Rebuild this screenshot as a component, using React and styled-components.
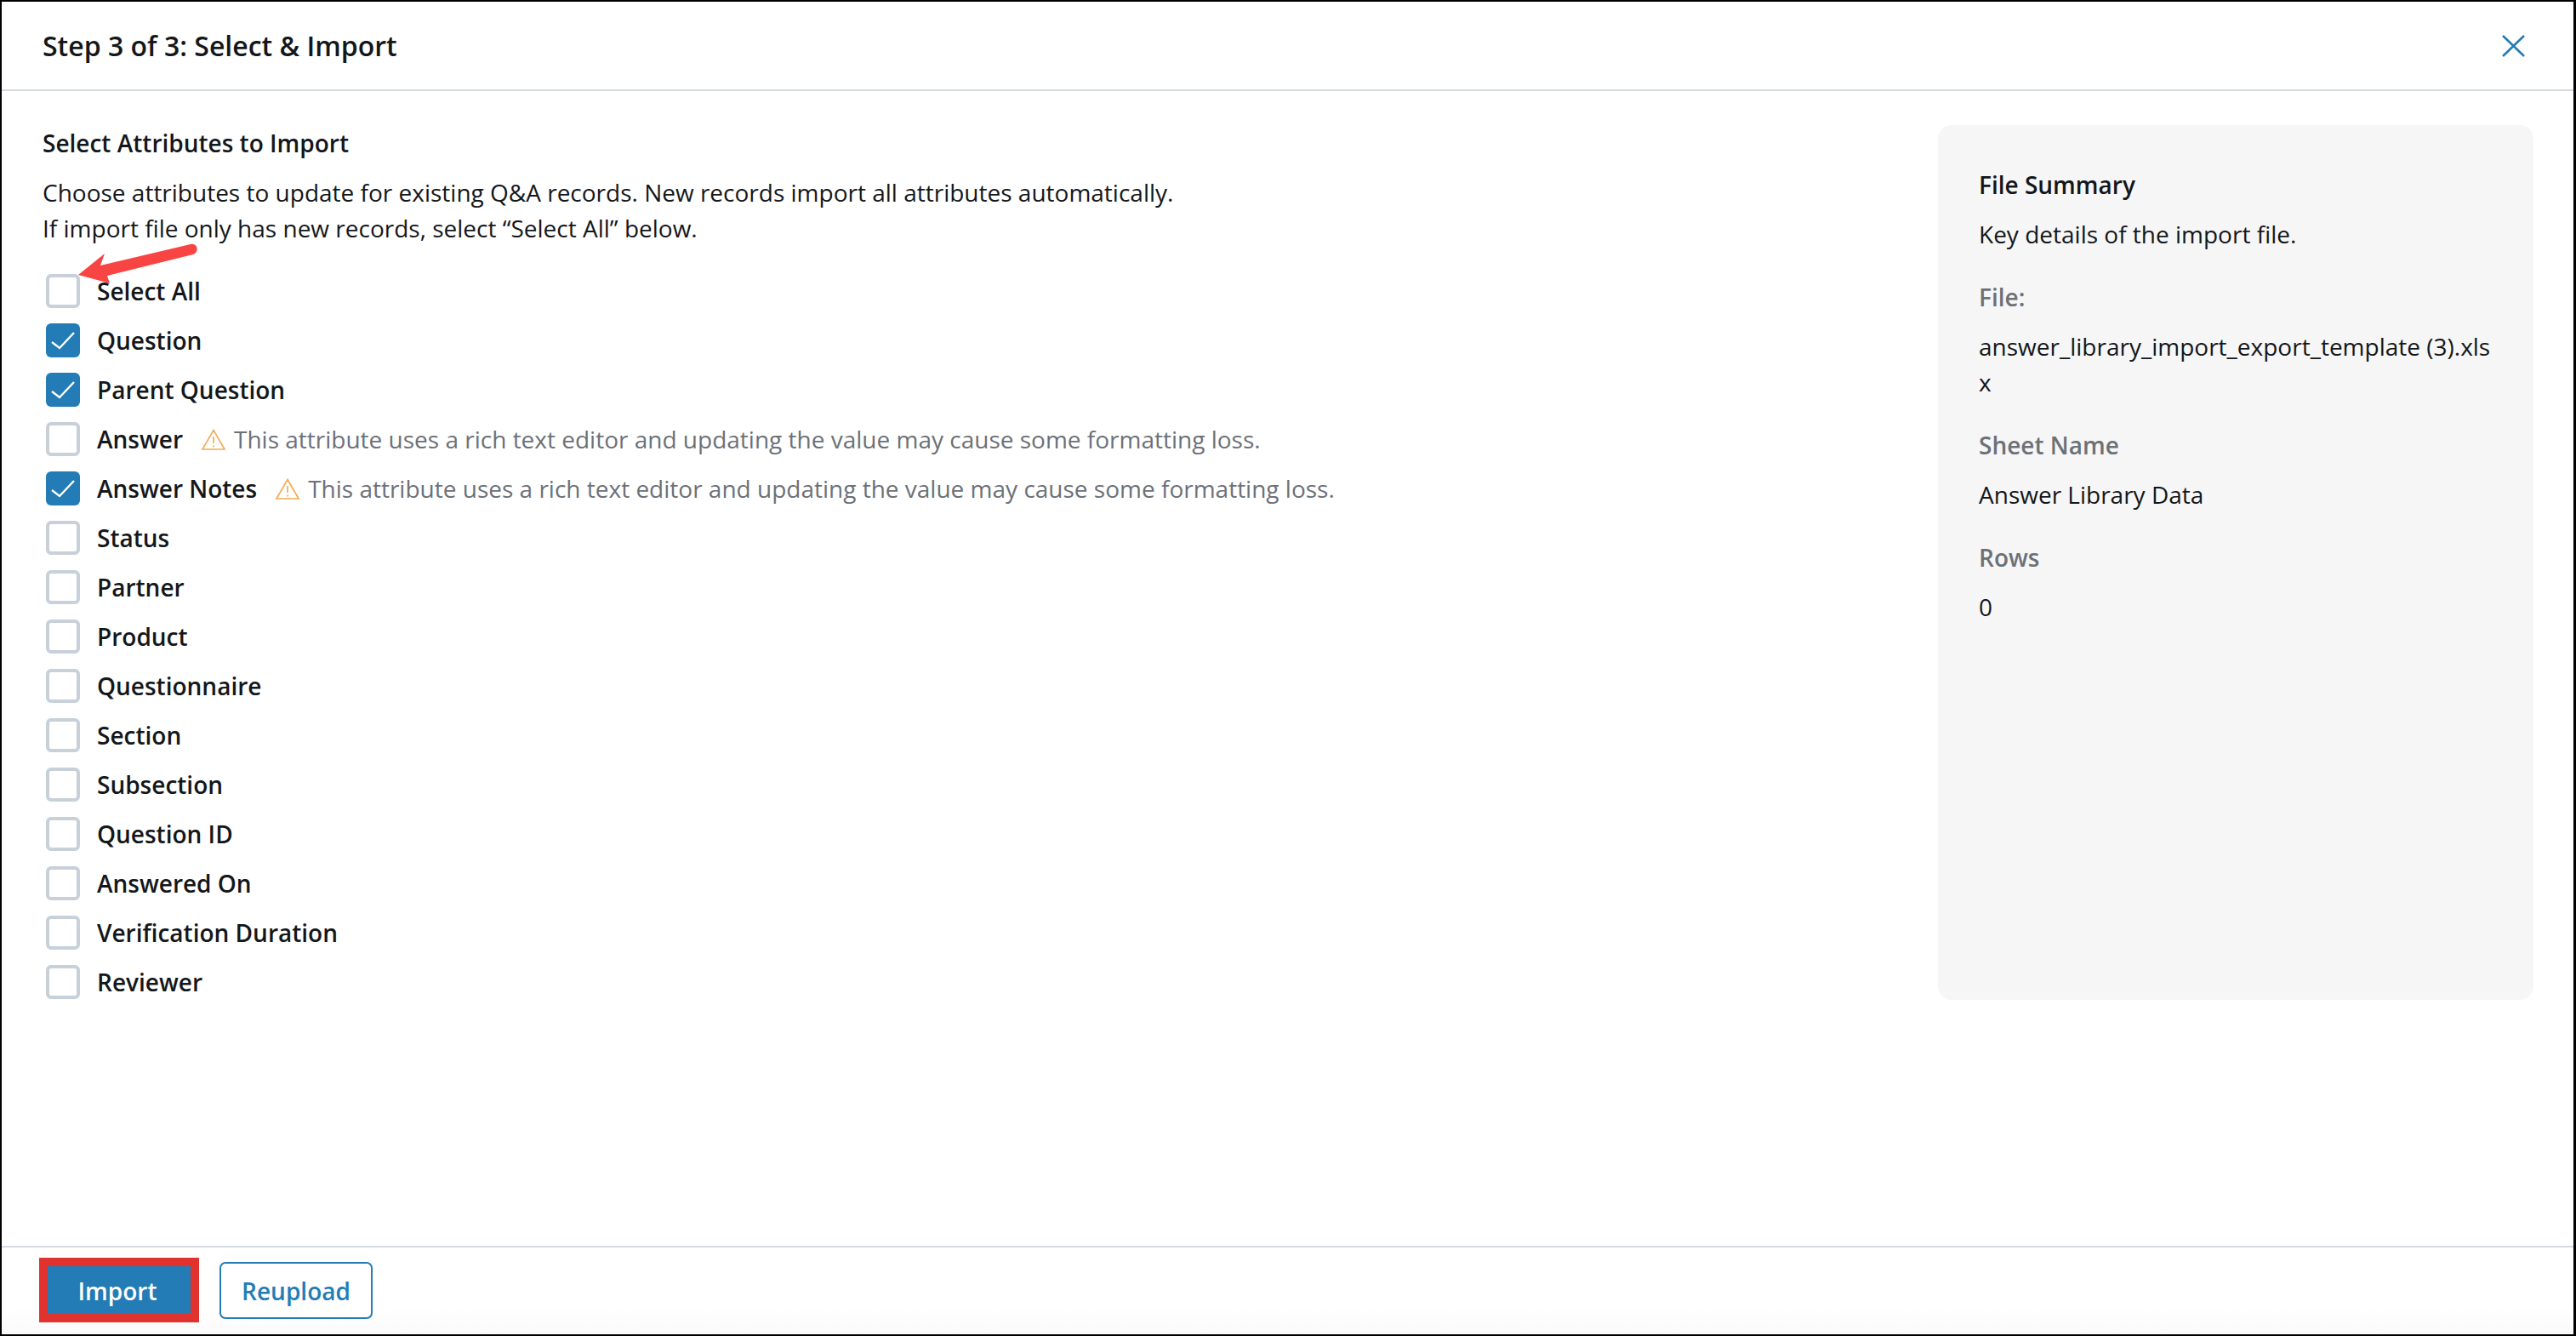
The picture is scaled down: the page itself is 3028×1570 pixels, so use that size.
import styled, { createGlobalStyle } from "styled-components";

const attributes = [
  { label: "Select All" },
  { label: "Question", checked: true },
  { label: "Parent Question", checked: true },
  { label: "Answer", warning: true },
  { label: "Answer Notes", checked: true, warning: true },
  { label: "Status" },
  { label: "Partner" },
  { label: "Product" },
  { label: "Questionnaire" },
  { label: "Section" },
  { label: "Subsection" },
  { label: "Question ID" },
  { label: "Answered On" },
  { label: "Verification Duration" },
  { label: "Reviewer" },
];

const summary = [
  { name: "File:", value: "answer_library_import_export_template (3).xlsx" },
  { name: "Sheet Name", value: "Answer Library Data" },
  { name: "Rows", value: "0" },
];

const App = () => {
  return (
    <Modal>
      <GlobalStyle />
      <Header>
        <Title>Step 3 of 3: Select &amp; Import</Title>
        <CloseIcon viewBox="0 0 27 26">
          <path d="M1 1 L26 25 M26 1 L1 25" />
        </CloseIcon>
      </Header>
      <Body>
        <Attributes>
          <Heading>Select Attributes to Import</Heading>
          <Description>
            Choose attributes to update for existing Q&amp;A records. New records import all attributes automatically.
            <br />
            If import file only has new records, select “Select All” below.
          </Description>
          <AttributeList>
            {attributes.map(({ label, checked, warning }) => {
              return (
                <AttributeRow key={label}>
                  <Checkbox $checked={checked}>
                    {checked && (
                      <svg width="40" height="40" viewBox="0 0 40 40">
                        <path d="M7 22 L16 29 L33 11" fill="none" stroke="#fff" strokeWidth="2.4" />
                      </svg>
                    )}
                  </Checkbox>
                  <AttributeLabel>{label}</AttributeLabel>
                  {warning && (
                    <>
                      <WarningIcon viewBox="0 0 28 25">
                        <path d="M14 1.5 L27 24 L1 24 Z" />
                        <path d="M14 9 V17 M14 19.5 V21.5" />
                      </WarningIcon>
                      <WarningText>
                        This attribute uses a rich text editor and updating the value may cause some formatting loss.
                      </WarningText>
                    </>
                  )}
                </AttributeRow>
              );
            })}
          </AttributeList>
        </Attributes>
        <SummaryPanel>
          <SummaryTitle>File Summary</SummaryTitle>
          <SummaryText>Key details of the import file.</SummaryText>
          {summary.map(({ name, value }) => {
            return (
              <SummaryItem key={name}>
                <SummaryName>{name}</SummaryName>
                <SummaryValue>{value}</SummaryValue>
              </SummaryItem>
            );
          })}
        </SummaryPanel>
      </Body>
      <Footer>
        <ImportButton>Import</ImportButton>
        <ReuploadButton>Reupload</ReuploadButton>
      </Footer>
      <ArrowMark viewBox="0 0 150 60">
        <path d="M2 39 L33 14 L28 28 L134 3 C142 1 145 12 137 15 L36 40 L39 49 Z" />
      </ArrowMark>
    </Modal>
  );
};

const GlobalStyle = createGlobalStyle`
  html, body {
    margin: 0;
    padding: 0;
    background: #fff;
  }
  * {
    box-sizing: border-box;
  }
`;

const Modal = styled.div`
  position: relative;
  display: flex;
  flex-direction: column;
  width: 3028px;
  height: 1570px;
  border-style: solid;
  border-color: #000;
  border-width: 2px 3px 2px 2px;
  background: #fff;
  font-family: "Open Sans", sans-serif;
  font-size: 28px;
  line-height: 42px;
  color: #14171a;
`;

const Header = styled.div`
  display: flex;
  align-items: center;
  justify-content: space-between;
  flex: 0 0 105px;
  padding: 0 57px 0 48px;
  border-bottom: 2px solid #d5d9e0;
`;

const Title = styled.div`
  font-size: 32px;
  font-weight: 600;
`;

const CloseIcon = styled.svg`
  width: 27px;
  height: 26px;
  fill: none;
  stroke: #237cb5;
  stroke-width: 2.6;
`;

const Body = styled.div`
  display: flex;
  flex: 1;
  padding: 40px 47px 0 48px;
`;

const Attributes = styled.div`
  flex: 1;
`;

const Heading = styled.div`
  font-weight: 600;
`;

const Description = styled.p`
  margin: 16px 0 0;
`;

const AttributeList = styled.div`
  display: flex;
  flex-direction: column;
  gap: 18px;
  margin-top: 33px;
`;

const AttributeRow = styled.div`
  display: flex;
  align-items: center;
  height: 40px;
  padding-left: 4px;
`;

const Checkbox = styled.span`
  flex: 0 0 40px;
  width: 40px;
  height: 40px;
  margin-right: 20px;
  border-radius: 6px;
  border: ${({ $checked }) => ($checked ? "none" : "4px solid #c8d0da")};
  background: ${({ $checked }) => ($checked ? "#237cb5" : "#fff")};
`;

const AttributeLabel = styled.span`
  font-weight: 600;
`;

const WarningIcon = styled.svg`
  flex: 0 0 28px;
  width: 28px;
  height: 25px;
  margin: 0 10px 0 22px;
  fill: none;
  stroke: #f7ab56;
  stroke-width: 1.7;
`;

const WarningText = styled.span`
  color: #6c7178;
`;

const SummaryPanel = styled.div`
  flex: 0 0 700px;
  height: 1028px;
  padding: 49px 50px 0 48px;
  border-radius: 16px;
  background: #f6f6f6;
`;

const SummaryTitle = styled.div`
  font-weight: 600;
`;

const SummaryText = styled.div`
  margin-top: 16px;
`;

const SummaryItem = styled.div`
  margin-top: 32px;
`;

const SummaryName = styled.div`
  font-weight: 600;
  color: #6c7178;
`;

const SummaryValue = styled.div`
  margin-top: 16px;
  word-break: break-all;
`;

const Footer = styled.div`
  display: flex;
  align-items: center;
  gap: 24px;
  flex: 0 0 104px;
  padding: 0 0 2px 44px;
  border-top: 2px solid #d5d9e0;
  background: linear-gradient(#fff 70%, #fafafa);
`;

const ImportButton = styled.button`
  width: 188px;
  height: 76px;
  padding: 2px 4px 0 0;
  border: 10px solid #e0332f;
  background: #237cb5;
  color: #fff;
  font: 600 28px "Open Sans", sans-serif;
`;

const ReuploadButton = styled.button`
  width: 180px;
  height: 67px;
  padding: 2px 0 0;
  border: 2px solid #237cb5;
  border-radius: 7px;
  background: #fff;
  color: #237cb5;
  font: 600 28px "Open Sans", sans-serif;
`;

const ArrowMark = styled.svg`
  position: absolute;
  left: 88px;
  top: 282px;
  width: 150px;
  height: 60px;
  fill: #f94444;
`;

export default App;
